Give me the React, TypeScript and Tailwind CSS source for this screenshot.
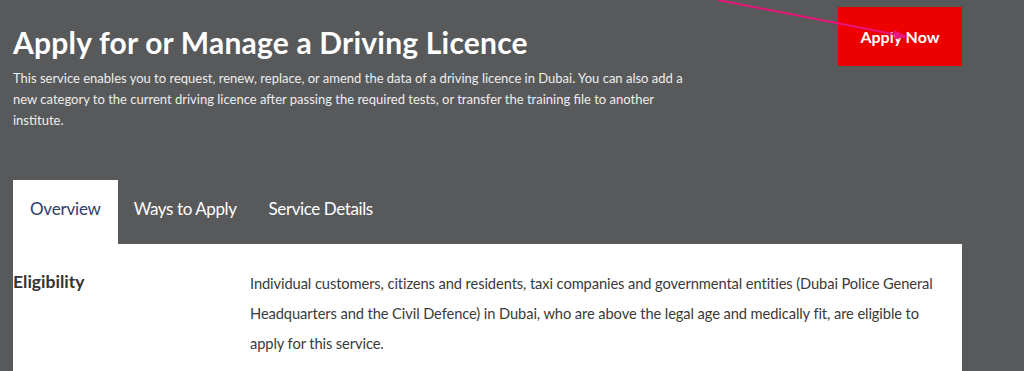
export default function App() {
  const tabs = ['Overview', 'Ways to Apply', 'Service Details'];

  return (
    <div className="relative min-h-screen bg-[#58595b] pl-[13px] font-['Lato',sans-serif] overflow-hidden">
      <div className="w-[949px]">
        <div className="flex justify-between items-start">
          <div className="pt-[24px]">
            <h1 className="text-[30px] leading-[36px] font-bold text-white tracking-[0.2px]">
              Apply for or Manage a Driving Licence
            </h1>
            <p className="mt-[8px] w-[690px] text-[13px] leading-[21px] text-[#eeeeee]">
              This service enables you to request, renew, replace, or amend the data of a driving licence in Dubai. You can also add a new category to the current driving licence after passing the required tests, or transfer the training file to another institute.
            </p>
          </div>
          <button className="mt-[7px] w-[124px] h-[59px] bg-[#ee0000] text-white text-[16px] font-bold">
            Apply Now
          </button>
        </div>

        <div className="flex mt-[49px] h-[64px]">
          {tabs.map((t, i) => (
            <div
              key={t}
              className={
                i === 0
                  ? 'flex items-center pb-[6px] px-[17px] bg-white text-[#2c3e6b] text-[17px] tracking-[-0.2px]'
                  : 'flex items-center pb-[6px] px-[16px] text-white text-[17px] tracking-[-0.4px]'
              }
            >
              {t}
            </div>
          ))}
        </div>

        <div className="bg-white pt-[28px] pb-[16px] flex">
          <div className="w-[237px] shrink-0 text-[17.5px] font-bold text-[#333333] leading-[20px]">
            Eligibility
          </div>
          <p className="w-[700px] text-[14.7px] leading-[30px] text-[#3a3a3a] -mt-[4px] tracking-[-0.1px]">
            Individual customers, citizens and residents, taxi companies and governmental entities (Dubai Police General Headquarters and the Civil Defence) in Dubai, who are above the legal age and medically fit, are eligible to apply for this service.
          </p>
        </div>
      </div>

      <svg className="absolute left-0 top-0 pointer-events-none" width="1024" height="371">
        <line x1="718" y1="0" x2="898" y2="35" stroke="#e8157a" strokeWidth="2" />
        <polygon points="908,37 894,30 895,39" fill="#e8157a" />
      </svg>
    </div>
  );
}
